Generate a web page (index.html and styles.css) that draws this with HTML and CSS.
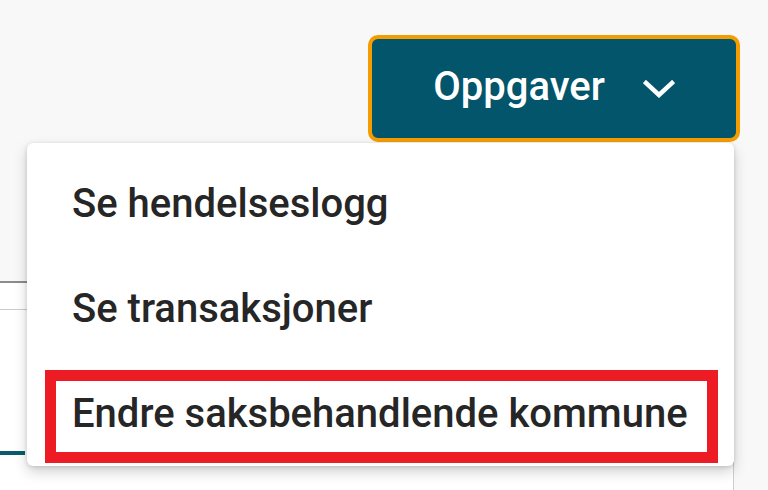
FILE: index.html
```html
<!DOCTYPE html>
<html lang="no">
<head>
<meta charset="utf-8">
<title>Oppgaver</title>
<link rel="stylesheet" href="styles.css">
</head>
<body>
<div class="page">
  <header class="header">
    <button class="task-btn" type="button">
      <span class="task-label">Oppgaver</span>
      <svg class="chev" width="32" height="18" viewBox="0 0 32 18" aria-hidden="true"><path d="M3 3 L16 15 L29 3" fill="none" stroke="#ffffff" stroke-width="4.5" stroke-linecap="square"/></svg>
    </button>
  </header>
  <section class="card">
    <div class="card-row"></div>
    <div class="card-body">
      <div class="tab-indicator"></div>
    </div>
  </section>
  <ul class="menu">
    <li class="menu-item">Se hendelseslogg</li>
    <li class="menu-item">Se transaksjoner</li>
    <li class="menu-item highlighted">Endre saksbehandlende kommune</li>
  </ul>
</div>
</body>
</html>
```
FILE: styles.css
```css
html, body {
  margin: 0;
  padding: 0;
}
body {
  background: #f8f8f8;
  font-family: Roboto, "Liberation Sans", sans-serif;
  width: 768px;
  height: 490px;
  overflow: hidden;
}
.page {
  position: relative;
  width: 768px;
  height: 490px;
}
.header {
  display: flex;
  justify-content: flex-end;
  padding: 35px 28px 0 0;
  height: 246px;
  box-sizing: border-box;
}
.task-btn {
  width: 372px;
  height: 107px;
  box-sizing: border-box;
  border: 4px solid #f59c00;
  border-radius: 10px;
  background: #02556a;
  color: #ffffff;
  display: flex;
  align-items: center;
  justify-content: center;
  gap: 38px;
  padding: 0 0 4px 0;
  font-family: Roboto, "Liberation Sans", sans-serif;
  font-weight: 500;
  font-size: 40px;
  cursor: pointer;
}
.chev {
  display: block;
  margin-top: 4px;
}
.card {
  margin-top: 35px;
  margin-right: 34px;
  height: 209px;
  background: #ffffff;
  border-top: 2px solid #8c8c8c;
  border-right: 1px solid #cfcfcf;
}
.card-row {
  height: 26px;
  border-bottom: 1px solid #cccccc;
}
.card-body {
  padding-top: 141px;
}
.tab-indicator {
  width: 25px;
  height: 4px;
  background: #0b5a6c;
}
.menu {
  position: absolute;
  left: 27px;
  top: 143px;
  width: 707px;
  height: 323px;
  box-sizing: border-box;
  margin: 0;
  padding: 8px 0 0 0;
  list-style: none;
  background: #ffffff;
  border-radius: 6px;
  box-shadow: 0 6px 14px rgba(0,0,0,0.18), 0 1px 4px rgba(0,0,0,0.14);
}
.menu-item {
  position: relative;
  height: 105px;
  display: flex;
  align-items: center;
  padding-left: 45px;
  font-size: 40px;
  font-weight: 500;
  color: #262626;
}
.highlighted::after {
  content: "";
  position: absolute;
  left: 18px;
  right: 16px;
  top: 9px;
  bottom: 3px;
  border: 11px solid #ed1c24;
}
```
